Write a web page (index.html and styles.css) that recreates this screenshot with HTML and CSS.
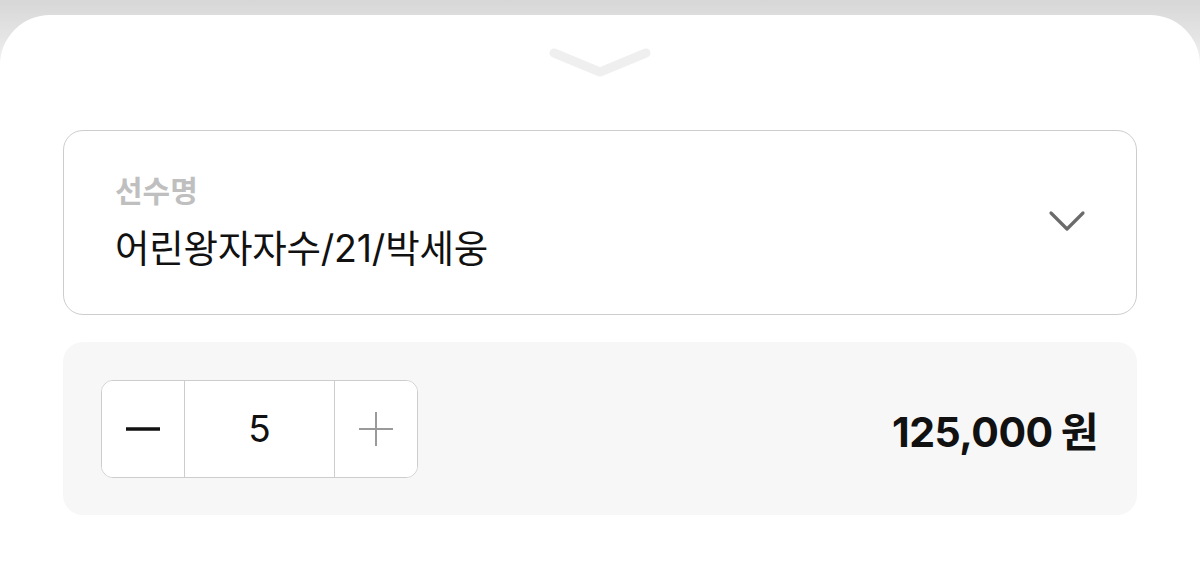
FILE: index.html
```html
<!DOCTYPE html>
<html lang="ko">

<head>
    <meta charset="UTF-8">
    <meta name="viewport" content="width=device-width, initial-scale=1.0">
    <title>선수 선택</title>
    <link rel="stylesheet" href="styles.css">
</head>

<body>
    <div class="backdrop">
        <div class="sheet">
            <!-- 시트 닫기 핸들 -->
            <button class="sheet-handle" type="button" aria-label="닫기">
                <svg width="104" height="36" viewBox="0 0 104 36">
                    <polyline points="6,10 52,29 98,10" fill="none" stroke="#efefef" stroke-width="9" stroke-linecap="round" stroke-linejoin="round" />
                </svg>
            </button>

            <div class="select-box">
                <div class="select-text">
                    <span class="select-label">선수명</span>
                    <span class="select-value">어린왕자자수/21/박세웅</span>
                </div>
                <svg class="select-arrow" width="38" height="24" viewBox="0 0 38 24">
                    <polyline points="3,4 19,20 35,4" fill="none" stroke="#6b6b6b" stroke-width="3.2" stroke-linecap="round" stroke-linejoin="round" />
                </svg>
            </div>

            <div class="order-row">
                <div class="stepper">
                    <button class="step-btn" type="button" aria-label="빼기">
                        <svg width="36" height="36" viewBox="0 0 36 36">
                            <line x1="1" y1="18" x2="35" y2="18" stroke="#111" stroke-width="3.4" />
                        </svg>
                    </button>
                    <span class="step-count">5</span>
                    <button class="step-btn" type="button" aria-label="더하기">
                        <svg width="36" height="36" viewBox="0 0 36 36">
                            <line x1="1" y1="18" x2="35" y2="18" stroke="#9a9a9a" stroke-width="2" />
                            <line x1="18" y1="1" x2="18" y2="35" stroke="#9a9a9a" stroke-width="2" />
                        </svg>
                    </button>
                </div>
                <div class="price">125,000<span class="won">원</span></div>
            </div>
        </div>
    </div>
</body>

</html>
```

FILE: styles.css
```css
/* 기본 */
html,
body {
    margin: 0;
    padding: 0;
    height: 100%;
}

body {
    font-family: Inter, "Noto Sans CJK KR", sans-serif;
    color: #111;
    background: #fff;
}

.backdrop {
    padding-top: 15px;
    height: 100%;
    box-sizing: border-box;
    background: linear-gradient(#d7d7d7 0, #e4e4e4 35px, #fff 90px);
}

.sheet {
    height: 100%;
    background: #fff;
    border-radius: 50px 50px 0 0;
    padding: 0 63px;
    box-sizing: border-box;
}

.sheet-handle {
    display: block;
    margin: 0 auto;
    padding: 0;
    padding-top: 28px;
    border: none;
    background: none;
}

.sheet-handle svg {
    display: block;
}

/* 선수 선택 박스 */
.select-box {
    margin-top: 51px;
    height: 185px;
    box-sizing: border-box;
    border: 1px solid #cdcdcd;
    border-radius: 20px;
    padding: 0 50px 0 51px;
    display: flex;
    align-items: center;
    justify-content: space-between;
}

.select-text {
    display: flex;
    flex-direction: column;
    gap: 19px;
    padding-bottom: 2px;
}

.select-label {
    font-family: "Noto Sans CJK KR", sans-serif;
    font-size: 30px;
    font-weight: 700;
    color: #bfbfbf;
    line-height: 36px;
}

.select-value {
    font-family: Inter, "Noto Sans CJK KR", sans-serif;
    font-size: 37.5px;
    line-height: 46px;
    color: #111;
    letter-spacing: -0.2px;
}

.select-arrow {
    display: block;
    margin-bottom: 4px;
}

/* 수량 / 가격 */
.order-row {
    margin-top: 27px;
    height: 173px;
    box-sizing: border-box;
    background: #f7f7f7;
    border-radius: 20px;
    padding: 0 39px 0 38px;
    display: flex;
    align-items: center;
    justify-content: space-between;
}

.stepper {
    display: flex;
    height: 98px;
    box-sizing: border-box;
    border: 1px solid #cdcdcd;
    border-radius: 12px;
    background: #fff;
    overflow: hidden;
}

.step-btn {
    width: 82px;
    padding: 0;
    border: none;
    background: #fff;
    display: flex;
    align-items: center;
    justify-content: center;
}

.step-count {
    width: 149px;
    border-left: 1px solid #cdcdcd;
    border-right: 1px solid #cdcdcd;
    display: flex;
    align-items: center;
    justify-content: center;
    font-size: 37px;
    font-weight: 400;
    color: #111;
}

.price {
    font-size: 41px;
    font-weight: 700;
    letter-spacing: -0.5px;
    color: #111;
}

.won {
    font-family: "Noto Sans CJK KR", sans-serif;
    margin-left: 8px;
}
```
